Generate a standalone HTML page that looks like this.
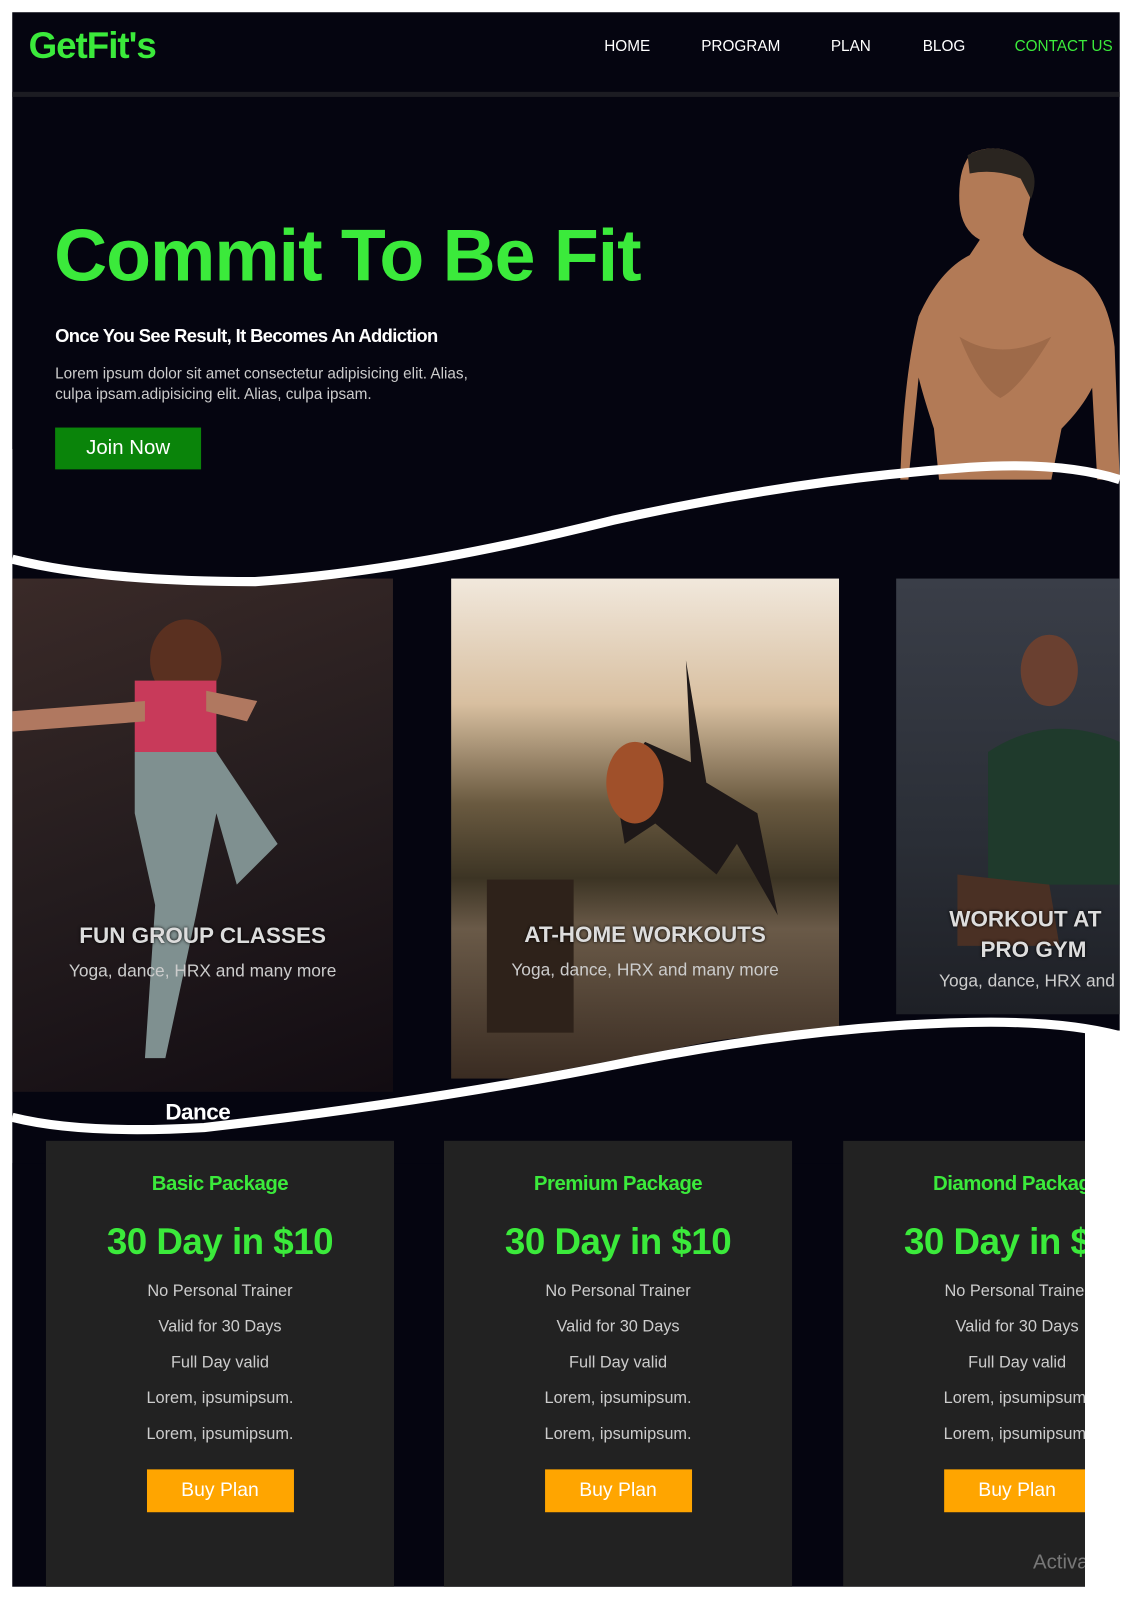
<!DOCTYPE html>
<html><head><meta charset="utf-8"><style>
html,body{margin:0;padding:0;background:#fff;width:1133px;height:1600px;overflow:hidden}
#w{position:absolute;left:0;top:0;width:1110px;height:1568px;transform:scale(1.0207,1.0204);transform-origin:0 0;font-family:"Liberation Sans",sans-serif}
.a{position:absolute}
.nav{color:#fff;font-size:15px;top:37px}
.c{background:#222;width:341px;top:1118px;height:437px;text-align:center}
.c .t{color:#3bea3b;font-size:20px;font-weight:bold;margin-top:31px;letter-spacing:-0.5px}
.c .p{color:#3bea3b;font-size:36px;font-weight:bold;margin-top:24px;letter-spacing:-0.5px}
.c .i{color:#ccc;font-size:16px;line-height:35px}
.c .b{display:inline-block;width:144px;height:42px;line-height:42px;background:#ffa500;color:#fff;font-size:19px;margin-top:17px}
.ct{color:#ddd;font-weight:bold;font-size:22px;text-align:center;text-shadow:0 0 3px #000}
.cs{color:#ccc;font-size:17px;text-align:center}
</style></head><body><div id="w">
<div class="a" style="left:12px;top:12px;width:1085px;height:1543px;background:#050510"></div>
<div class="a" style="left:28px;top:24px;color:#3bea3b;font-size:36px;font-weight:bold;letter-spacing:-1px">GetFit's</div>
<div class="a nav" style="left:592px">HOME</div>
<div class="a nav" style="left:687px">PROGRAM</div>
<div class="a nav" style="left:814px">PLAN</div>
<div class="a nav" style="left:904px">BLOG</div>
<div class="a nav" style="left:994px;color:#3bea3b">CONTACT US</div>
<div class="a" style="left:12px;top:90px;width:1085px;height:5px;background:#1c1c22"></div>
<div class="a" style="left:53px;top:210px;color:#3bea3b;font-size:72px;font-weight:bold;letter-spacing:-1px">Commit To Be Fit</div>
<div class="a" style="left:54px;top:319px;color:#fff;font-size:18px;font-weight:bold;letter-spacing:-0.6px">Once You See Result, It Becomes An Addiction</div>
<div class="a" style="left:54px;top:357px;color:#ccc;font-size:15px;line-height:20px">Lorem ipsum dolor sit amet consectetur adipisicing elit. Alias,<br>culpa ipsam.adipisicing elit. Alias, culpa ipsam.</div>
<div class="a" style="left:54px;top:419px;width:143px;height:41px;background:#0a840a;color:#fff;font-size:20px;line-height:41px;text-align:center">Join Now</div>
<svg class="a" style="left:880px;top:140px" width="220" height="340" viewBox="0 0 220 340">
<path d="M72 10 Q95 0 118 12 Q135 30 128 60 L122 90 Q130 110 170 125 Q205 140 212 200 L217 330 L195 330 L190 240 Q180 260 160 280 L150 330 L40 330 L35 280 Q25 250 20 230 L10 330 L2 330 Q5 230 20 170 Q40 125 70 110 L80 95 Q62 85 60 60 Q58 25 72 10Z" fill="#b27a56"/>
<path d="M68 12 Q95 -2 122 14 Q140 30 130 55 L120 35 Q95 25 70 30Z" fill="#2a2520"/>
<path d="M60 190 Q100 215 150 190 Q120 240 100 250 Q80 240 60 190Z" fill="#8a5a3c" opacity=".5"/>
</svg>
<div class="a" style="left:12px;top:567px;width:373px;height:503px;background:linear-gradient(160deg,#3a2a28,#241c1e 50%,#120c12)"></div>
<svg class="a" style="left:12px;top:567px" width="373" height="503"><ellipse cx="170" cy="80" rx="35" ry="40" fill="#5a3020"/><rect x="120" y="100" width="80" height="70" fill="#c83a5a"/><path d="M120 170 L200 170 L260 260 L220 300 L200 230 L180 330 L150 470 L130 470 L140 320 L120 230Z" fill="#7f9090"/><path d="M0 130 L130 120 L130 140 L0 150Z M190 110 L240 120 L230 140 L190 130Z" fill="#b07860"/></svg>
<div class="a ct" style="left:12px;top:904px;width:373px">FUN GROUP CLASSES</div>
<div class="a cs" style="left:12px;top:942px;width:373px">Yoga, dance, HRX and many more</div>
<div class="a" style="left:442px;top:567px;width:380px;height:490px;background:linear-gradient(180deg,#f1e8dc 0%,#d8bfa0 25%,#6a5a40 45%,#3c3424 60%,#6a5a48 70%,#3a2c22 100%)"></div>
<svg class="a" style="left:442px;top:567px" width="380" height="490"><rect x="35" y="295" width="85" height="150" fill="#2e221a"/><path d="M230 80 L235 180 L190 160 L160 200 L170 260 L200 240 L260 290 L280 260 L320 330 L300 230 L250 200Z" fill="#1e1818"/><ellipse cx="180" cy="200" rx="28" ry="40" fill="#a0502a"/></svg>
<div class="a ct" style="left:442px;top:903px;width:380px">AT-HOME WORKOUTS</div>
<div class="a cs" style="top:941px;width:400px;left:432px">Yoga, dance, HRX and many more</div>
<div class="a" style="left:878px;top:567px;width:219px;height:427px;background:linear-gradient(180deg,#3a3e48,#2a2e36 60%,#1e2026)"></div>
<svg class="a" style="left:878px;top:567px" width="219" height="427"><ellipse cx="150" cy="90" rx="28" ry="35" fill="#6a4030"/><path d="M90 170 Q150 130 219 160 L219 300 L90 300Z" fill="#1f3a2c"/><path d="M60 290 L150 300 L160 360 L60 360Z" fill="#4a3024"/></svg>
<div class="a ct" style="left:930px;top:886px;width:200px;text-align:left;line-height:30px">WORKOUT AT<br>&nbsp;&nbsp;&nbsp;&nbsp;&nbsp;PRO GYM</div>
<div class="a cs" style="left:920px;top:952px;white-space:nowrap">Yoga, dance, HRX and</div>
<svg class="a" style="left:0;top:440px" width="1110" height="700" viewBox="0 0 1110 700">
<path d="M12 108 Q100 130 250 130 Q400 120 600 70 Q780 30 950 18 Q1040 12 1097 30" fill="none" stroke="#fff" stroke-width="9"/>
<path d="M12 655 Q100 670 250 660 Q500 620 700 580 Q900 555 1063 570 L1063 700 L12 700Z" fill="#050510"/>
<path d="M12 655 Q80 672 200 665 Q420 640 620 600 Q800 565 950 562 Q1040 560 1097 575" fill="none" stroke="#fff" stroke-width="9"/>
<path d="M1063 575 Q1085 570 1110 580 L1110 700 L1063 700Z" fill="#fff"/>
<rect x="0" y="0" width="12" height="700" fill="#fff"/>
</svg>
<div class="a" style="left:162px;top:1077px;color:#fff;font-size:22px;font-weight:bold;letter-spacing:-0.5px">Dance</div>
<div class="a" style="left:1063px;top:1010px;width:47px;height:560px;background:#fff"></div>
<div class="a c" style="left:45px"><div class="t">Basic Package</div><div class="p">30 Day in $10</div><div style="margin-top:10px"><div class="i">No Personal Trainer</div><div class="i">Valid for 30 Days</div><div class="i">Full Day valid</div><div class="i">Lorem, ipsumipsum.</div><div class="i">Lorem, ipsumipsum.</div></div><div class="b">Buy Plan</div></div>
<div class="a c" style="left:435px"><div class="t">Premium Package</div><div class="p">30 Day in $10</div><div style="margin-top:10px"><div class="i">No Personal Trainer</div><div class="i">Valid for 30 Days</div><div class="i">Full Day valid</div><div class="i">Lorem, ipsumipsum.</div><div class="i">Lorem, ipsumipsum.</div></div><div class="b">Buy Plan</div></div>
<div class="a" style="left:826px;top:1118px;width:237px;height:437px;overflow:hidden"><div class="a c" style="left:0;top:0"><div class="t">Diamond Package</div><div class="p">30 Day in $10</div><div style="margin-top:10px"><div class="i">No Personal Trainer</div><div class="i">Valid for 30 Days</div><div class="i">Full Day valid</div><div class="i">Lorem, ipsumipsum.</div><div class="i">Lorem, ipsumipsum.</div></div><div class="b">Buy Plan</div></div><div class="a" style="left:186px;top:402px;color:#777;font-size:20px">Activa</div></div>
</div></body></html>
